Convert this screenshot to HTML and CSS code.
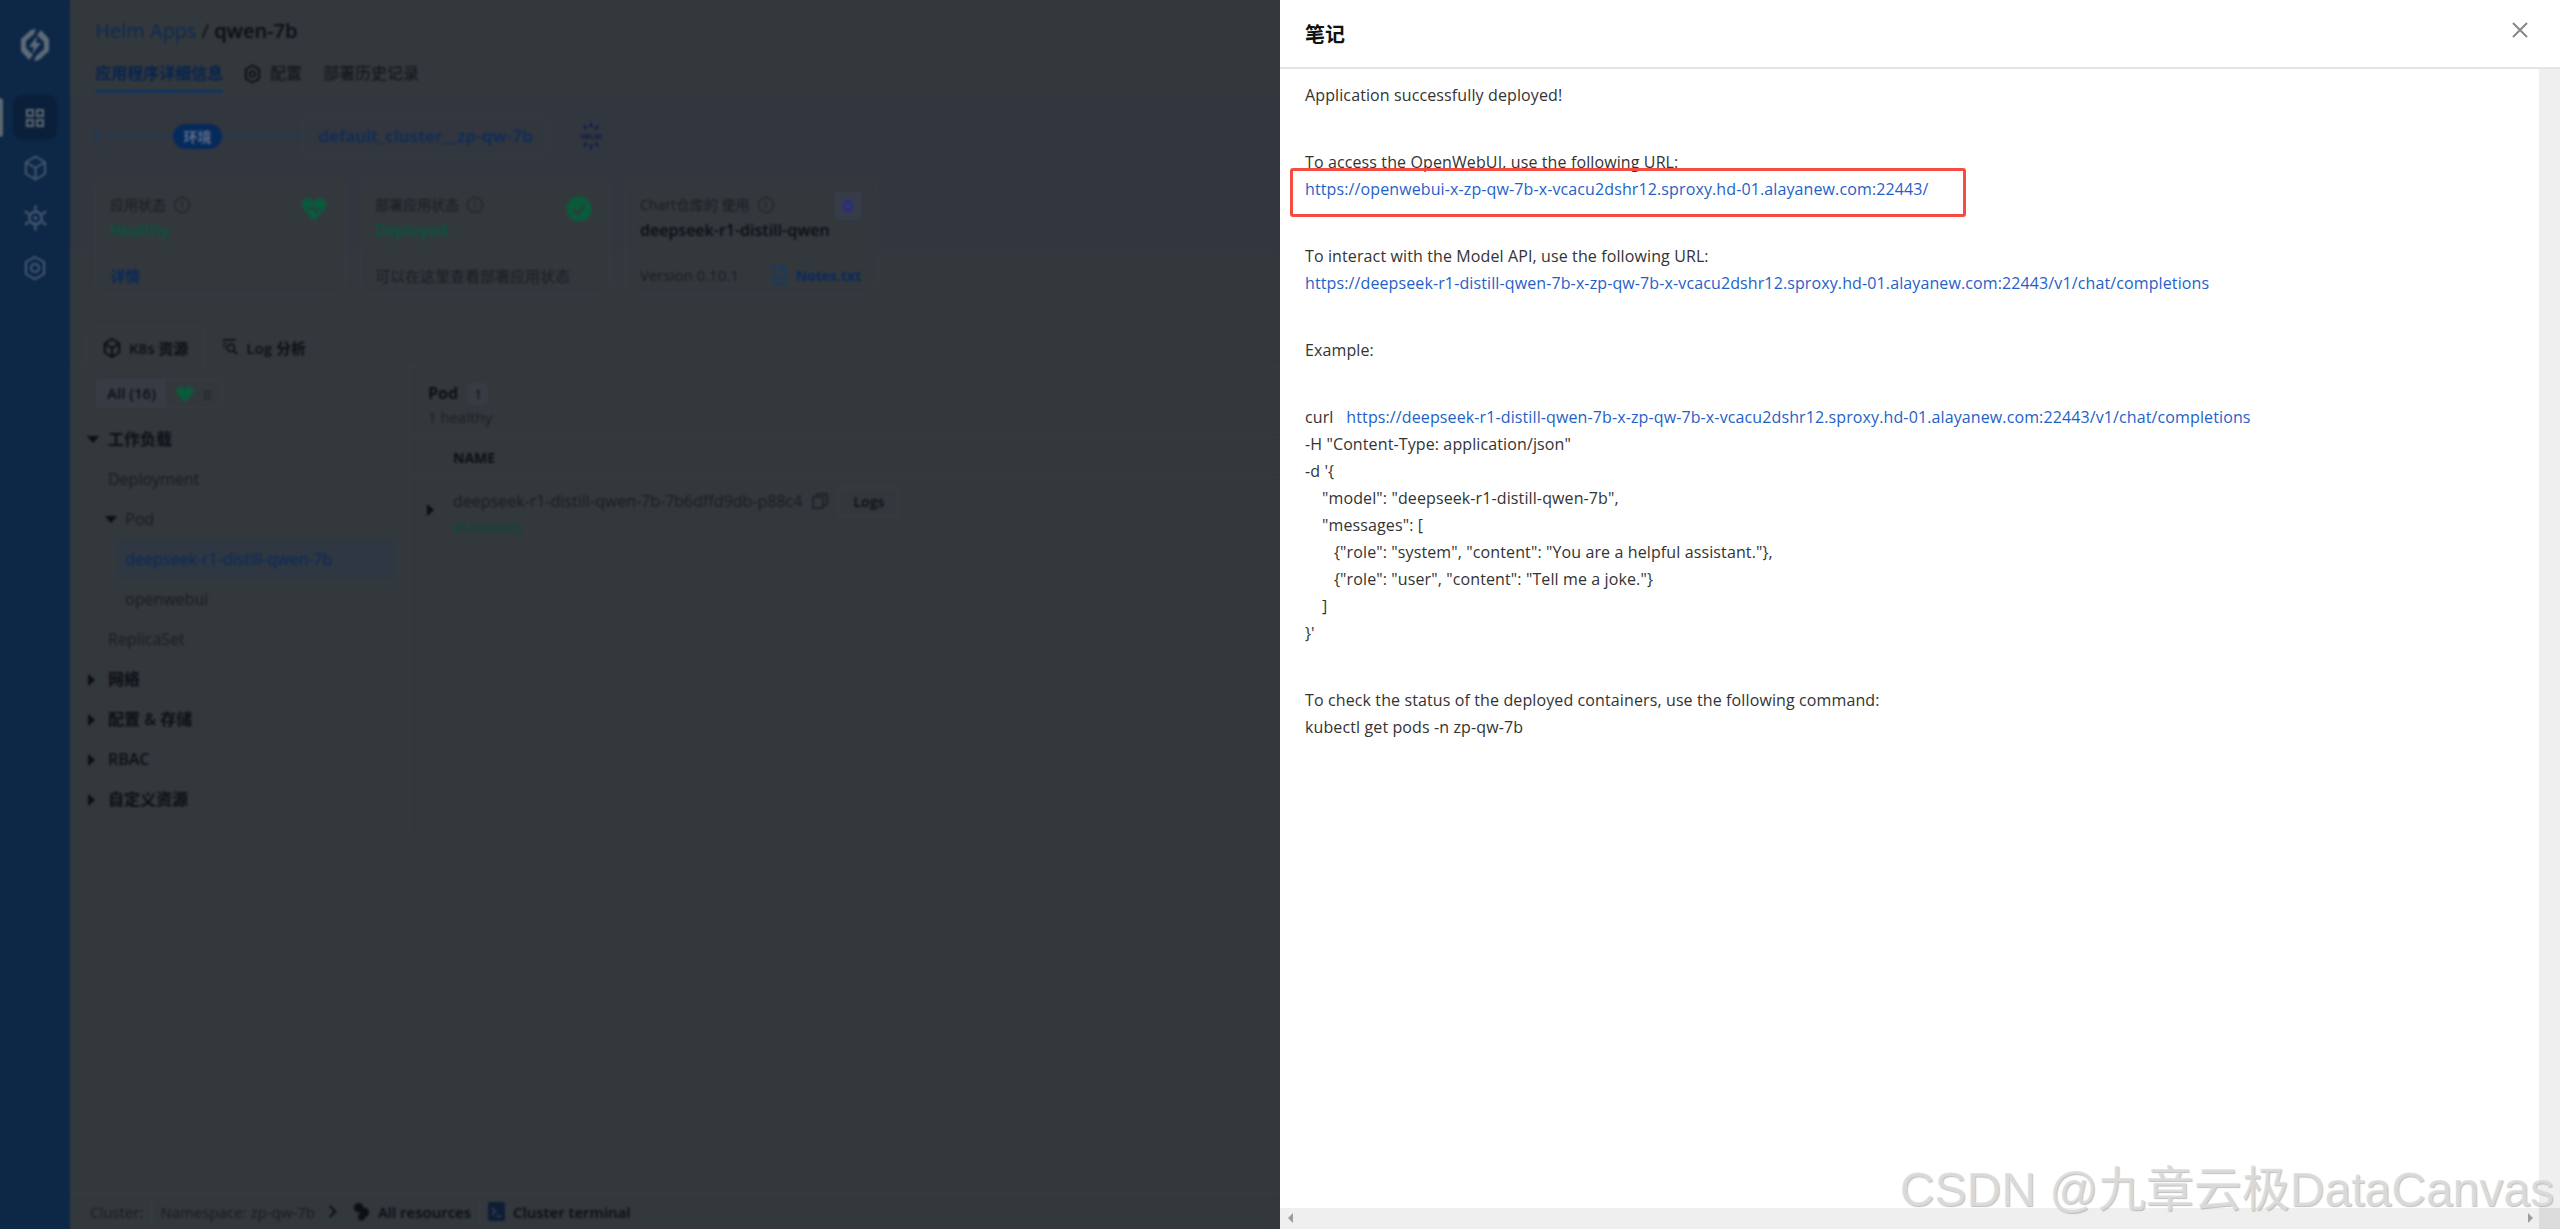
FILE: index.html
```html
<!DOCTYPE html>
<html lang="zh">
<head>
<meta charset="utf-8">
<title>Helm Apps / qwen-7b</title>
<link rel="stylesheet" href="styles.css">
</head>
<body>
<div class="app">
  <nav class="side">
    <svg class="logo" viewBox="0 0 32 36" width="32" height="36"><path d="M12 3 2 12v12l8 9 4-5-7-7v-7l8-7 2-5zM20 33l10-9V12L22 3l-4 5 7 7v7l-8 7-2 5z" fill="#5d6b78"/><path d="M18 9 10 20h5l-2 7 9-11h-5z" fill="#5d6b78"/></svg>
    <div class="side-item active">
      <svg viewBox="0 0 20 20" width="20" height="20"><g fill="none" stroke="#5d6973" stroke-width="2"><rect x="2" y="2" width="6" height="6"/><rect x="12" y="2" width="6" height="6"/><rect x="2" y="12" width="6" height="6"/><rect x="12" y="12" width="6" height="6"/></g></svg>
    </div>
    <div class="side-item">
      <svg viewBox="0 0 24 28" width="23" height="28"><g fill="none" stroke="#465a70" stroke-width="2"><path d="M12 2 22 8v12l-10 6-10-6V8z"/><path d="M2 8l10 6 10-6M12 14v12"/></g></svg>
    </div>
    <div class="side-item">
      <svg viewBox="0 0 26 30" width="25" height="30"><g fill="none" stroke="#465a70" stroke-width="2.4"><circle cx="13" cy="15" r="6.5"/><path d="M13 2v5M13 23v5M2 8l4 3M20 19l4 3M2 22l4-3M20 11l4-3"/></g><circle cx="13" cy="15" r="2" fill="#465a70"/></svg>
    </div>
    <div class="side-item">
      <svg viewBox="0 0 24 26" width="24" height="26"><g fill="none" stroke="#465a70" stroke-width="2"><path d="M12 2 21 7v12l-9 5-9-5V7z"/><circle cx="12" cy="13" r="4"/></g></svg>
    </div>
  </nav>

  <main class="main">
    <header class="head">
      <h1 class="title"><span class="crumb">Helm Apps</span> / <b>qwen-7b</b></h1>
      <div class="tabs">
        <span class="tab on">应用程序详细信息</span>
        <span class="tab icon-tab"><svg viewBox="0 0 18 20" width="17" height="20"><path d="M9 1l7 4v10l-7 4-7-4V5z" fill="none" stroke="#0d1014" stroke-width="2"/><circle cx="9" cy="10" r="3" fill="none" stroke="#0d1014" stroke-width="2"/></svg>配置</span>
        <span class="tab">部署历史记录</span>
      </div>
    </header>

    <section class="band">
      <div class="envline">
        <span class="tick"></span>
        <span class="rule r1"></span>
        <span class="env">环境</span>
        <span class="rule r2"></span>
        <span class="cluster">default_cluster__zp-qw-7b</span>
        <svg class="helm" viewBox="0 0 28 32" width="28" height="32"><g fill="#0c1c4c"><path d="M14 1l2 6h-4zM6 4l5 4-3 2zM22 4l-5 4 3 2zM14 31l2-6h-4zM6 28l5-4-3-2zM22 28l-5-4 3-2z"/></g><text x="14" y="19" class="helm-t">HELM</text></svg>
      </div>

      <div class="cards">
        <article class="card">
          <div class="card-top">
            <div class="lab">应用状态 <i class="q">!</i></div>
            <div class="val green">Healthy</div>
            <svg class="card-ic" viewBox="0 0 26 26" width="26" height="26"><path d="M13 25 2 13C-1 8 2 2 7 2c3 0 5 2 6 4 1-2 3-4 6-4 5 0 8 6 5 11z" fill="#0a5a3c"/><path d="M5 13h5l2-3 3 6 2-3h4" fill="none" stroke="#33383c" stroke-width="1.5"/></svg>
          </div>
          <div class="card-bot"><span class="link">详情</span></div>
        </article>
        <article class="card">
          <div class="card-top">
            <div class="lab">部署应用状态 <i class="q">!</i></div>
            <div class="val green">Deployed</div>
            <svg class="card-ic" viewBox="0 0 26 26" width="26" height="26"><circle cx="13" cy="13" r="12.5" fill="#0a5a3c"/><path d="M7 13.5l4.5 4.5L19 9" fill="none" stroke="#33383c" stroke-width="2.5"/></svg>
          </div>
          <div class="card-bot"><span class="mut">可以在这里查看部署应用状态</span></div>
        </article>
        <article class="card">
          <div class="card-top">
            <div class="lab">Chart仓库的 使用 <i class="q">!</i></div>
            <div class="val dark">deepseek-r1-distill-qwen</div>
            <span class="chart-ic"><svg viewBox="0 0 16 18" width="14" height="16"><path d="M8 1l6 4v8l-6 4-6-4V5z" fill="#2a2f78"/><circle cx="8" cy="9" r="2" fill="#3b3f5a"/></svg></span>
          </div>
          <div class="card-bot spread"><span class="mut">Version 0.10.1</span>
            <span class="link notes"><svg viewBox="0 0 16 20" width="16" height="22"><path d="M2 1h8l4 4v14H2z M10 1v4h4" fill="none" stroke="#123a6b" stroke-width="1.6"/><path d="M5 11h6M5 14h6" stroke="#123a6b" stroke-width="1.4"/></svg>Notes.txt</span></div>
        </article>
      </div>
    </section>

    <section class="lower">
      <div class="subtabs">
        <span class="stab on"><svg viewBox="0 0 20 22" width="18" height="20"><g fill="none" stroke="#0b0e12" stroke-width="2.2"><path d="M10 1l8 5v10l-8 5-8-5V6z"/><path d="M2 6l8 5 8-5M10 11v10"/></g></svg>K8s 资源</span>
        <span class="stab"><svg viewBox="0 0 18 20" width="16" height="18"><g fill="none" stroke="#0d1014" stroke-width="1.8"><path d="M1 2h14M1 6h4M1 10h3"/><circle cx="10" cy="11" r="4"/><path d="M13 14l4 4"/></g></svg>Log 分析</span>
      </div>

      <div class="split">
        <div class="tree">
          <div class="filter">
            <span class="f-all">All (16)</span>
            <span class="f-ok"><svg viewBox="0 0 26 26" width="18" height="18"><path d="M13 25 2 13C-1 8 2 2 7 2c3 0 5 2 6 4 1-2 3-4 6-4 5 0 8 6 5 11z" fill="#0a5a3c"/></svg>8</span>
          </div>
          <div class="row group"><i class="down"></i>工作负载</div>
          <div class="row l1">Deployment</div>
          <div class="row l1 sub"><i class="down"></i>Pod</div>
          <div class="row l2 sel">deepseek-r1-distill-qwen-7b</div>
          <div class="row l2">openwebui</div>
          <div class="row l1">ReplicaSet</div>
          <div class="row group"><i class="right"></i>网络</div>
          <div class="row group"><i class="right"></i>配置 &amp; 存储</div>
          <div class="row group"><i class="right"></i>RBAC</div>
          <div class="row group"><i class="right"></i>自定义资源</div>
        </div>

        <div class="detail">
          <div class="d-head"><b>Pod</b> <span class="count">1</span><div class="d-sub">1 healthy</div></div>
          <div class="d-cols">NAME</div>
          <div class="d-row">
            <i class="right big"></i>
            <div>
              <div class="pod-line">deepseek-r1-distill-qwen-7b-7b6dffd9db-p88c4
                <svg viewBox="0 0 16 16" width="16" height="16"><g fill="none" stroke="#1a1e22" stroke-width="1.5"><rect x="1" y="4" width="10" height="11"/><path d="M5 4V1h10v11h-4"/></g></svg>
                <span class="logs">Logs</span></div>
              <div class="running">RUNNING</div>
            </div>
          </div>
        </div>
      </div>
    </section>

    <footer class="foot">
      <span>Cluster:</span><span class="sep"></span><span>Namespace: zp-qw-7b</span>
      <svg class="chev" viewBox="0 0 10 14" width="9" height="13"><path d="M2 1l6 6-6 6" fill="none" stroke="#0d1014" stroke-width="2.4"/></svg>
      <span class="foot-b"><svg viewBox="0 0 18 20" width="17" height="19"><circle cx="6" cy="6" r="5" fill="#0d1014"/><circle cx="12" cy="11" r="5" fill="#0d1014"/><circle cx="9" cy="16" r="3.5" fill="#0d1014"/></svg>All resources</span>
      <span class="sep"></span>
      <span class="foot-b"><svg viewBox="0 0 18 20" width="17" height="19"><rect width="18" height="20" rx="2" fill="#0f1c36"/><path d="M4 6l4 4-4 4M9 15h5" fill="none" stroke="#3a4350" stroke-width="1.5"/></svg>Cluster terminal</span>
    </footer>
  </main>
</div>

<div class="scrim"></div>

<aside class="drawer">
  <header class="dr-head">
    <h2>笔记</h2>
    <svg class="close" viewBox="0 0 16 16" width="16" height="16"><path d="M1 1l14 14M15 1 1 15" stroke="#888" stroke-width="2" fill="none"/></svg>
  </header>
  <div class="dr-mid">
    <div class="notes-body">
      <p>Application successfully deployed!</p>
      <p>To access the OpenWebUI, use the following URL:<br><a>https://openwebui-x-zp-qw-7b-x-vcacu2dshr12.sproxy.hd-01.alayanew.com:22443/</a></p>
      <p>To interact with the Model API, use the following URL:<br><a>https://deepseek-r1-distill-qwen-7b-x-zp-qw-7b-x-vcacu2dshr12.sproxy.hd-01.alayanew.com:22443/v1/chat/completions</a></p>
      <p>Example:</p>
      <p>curl &nbsp; <a>https://deepseek-r1-distill-qwen-7b-x-zp-qw-7b-x-vcacu2dshr12.sproxy.hd-01.alayanew.com:22443/v1/chat/completions</a><br>
      -H "Content-Type: application/json"<br>
      -d '{<br>
      <span class="i1">"model": "deepseek-r1-distill-qwen-7b",</span><br>
      <span class="i1">"messages": [</span><br>
      <span class="i2">{"role": "system", "content": "You are a helpful assistant."},</span><br>
      <span class="i2">{"role": "user", "content": "Tell me a joke."}</span><br>
      <span class="i1">]</span><br>
      }'</p>
      <p>To check the status of the deployed containers, use the following command:<br>kubectl get pods -n zp-qw-7b</p>
    </div>
    <div class="vbar"></div>
  </div>
  <div class="hbar"><i class="arr-l"></i><i class="arr-r"></i><span class="corner"></span></div>
</aside>

<div class="redbox"></div>
<div class="mark">CSDN @九章云极DataCanvas</div>
</body>
</html>
```
FILE: styles.css
```css
* { box-sizing: border-box; }
html, body { margin: 0; height: 100%; overflow: hidden; }
body { font-family: "Open Sans", "Noto Sans CJK SC", sans-serif; font-size: 14px; color: #14181c; background: #33383c; }

.app { display: flex; height: 1229px; width: 2560px; }
.side { width: 70px; flex: none; background: #0d2747; display: flex; flex-direction: column; align-items: center; padding-top: 27px; }
.logo { margin-bottom: 32px; }
.side-item { width: 44px; height: 45px; margin-bottom: 5px; display: flex; align-items: center; justify-content: center; border-radius: 10px; position: relative; }
.side-item.active { background: #0a1f3a; }
.side-item.active::before { content: ""; position: absolute; left: -14px; top: 3px; width: 4px; height: 39px; background: #5b6770; border-radius: 0 3px 3px 0; }

.main { flex: 1; display: flex; flex-direction: column; min-width: 0; }
.head { height: 96px; padding: 17px 25px 0; }
.title { margin: 0; font-size: 20px; font-weight: 400; line-height: 28px; color: #0b0e12; }
.title b { font-weight: 600; }
.crumb { color: #0c2a52; }
.tabs { display: flex; gap: 21px; margin-top: 11px; height: 37px; }
.tab { font-size: 16px; line-height: 34px; color: #0f1216; height: 37px; display: flex; align-items: flex-start; gap: 9px; }
.tab svg { margin-top: 8px; }
.tab.on { font-weight: 700; color: #06244e; border-bottom: 3px solid #0f3566; }

.band { height: 156px; padding: 21px 25px 0; background: #32363e; position: relative; }
.envline { display: flex; align-items: center; height: 38px; }
.tick { width: 2px; height: 20px; background: #1d3a52; }
.rule { height: 2px; background: #1d3a52; }
.r1 { width: 76px; }
.r2 { width: 80px; }
.env { background: #052a5c; color: #5b6d86; font-size: 14px; font-weight: 700; width: 49px; height: 25px; line-height: 25px; text-align: center; border-radius: 13px; }
.cluster { margin-left: 0; width: 248px; height: 38px; line-height: 36px; padding-left: 15px; font-size: 17px; letter-spacing: .15px; font-weight: 600; color: #0b2c5a; border: 1px solid #363b45; border-radius: 6px; white-space: nowrap; }
.helm { margin-left: 27px; }
.helm-t { font: 700 7.5px "Open Sans", sans-serif; fill: #0c1c4c; text-anchor: middle; }

.cards { display: flex; gap: 14px; margin-top: 22px; }
.card { width: 251px; height: 119px; border: 1px solid #383d44; border-radius: 12px; background: #33383d; }
.card:nth-child(3) { width: 253px; }
.card-top { height: 75px; padding: 15px 14px 0; position: relative; }
.lab { font-size: 14px; line-height: 24px; color: #191d21; display: flex; align-items: center; gap: 8px; }
.q { width: 16px; height: 16px; border: 1px solid #191d21; border-radius: 50%; font-size: 10px; font-style: normal; line-height: 14px; text-align: center; color: #191d21; }
.val { font-size: 16px; line-height: 26px; font-weight: 600; white-space: nowrap; }
.green { color: #06553a; }
.dark { color: #0b0e12; }
.card-ic { position: absolute; right: 18px; top: 18px; }
.chart-ic { position: absolute; right: 16px; top: 14px; width: 26px; height: 28px; background: #383c4a; border-radius: 3px; display: flex; align-items: center; justify-content: center; }
.card-bot { height: 44px; padding: 0 14px; display: flex; align-items: center; font-size: 15px; }
.spread { justify-content: space-between; padding-right: 16px; }
.link { color: #08295a; font-weight: 700; }
.mut { color: #191d21; }
.notes { display: flex; align-items: center; gap: 7px; font-size: 14px; }

.lower { flex: 1; min-height: 0; }
.subtabs { display: flex; margin-top: 75px; height: 40px; padding-left: 15px; border-bottom: 1px solid #373c40; font-size: 15px; font-weight: 600; color: #0d1014; }
.stab { display: flex; align-items: center; gap: 8px; height: 40px; padding: 0 16px; border: 1px solid transparent; }
.stab.on { border-color: #383d41; border-bottom-color: #33383c; border-radius: 6px 6px 0 0; height: 41px; padding-left: 17px; }

.split { display: flex; }
.tree { width: 340px; border-right: 1px solid #363b3f; padding-top: 12px; height: 470px; font-size: 16px; color: #191d21; }
.filter { display: inline-flex; margin: 0 0 11px 26px; height: 29px; border: 1px solid #383d41; border-radius: 3px; vertical-align: top; font-weight: 600; font-size: 15px; }
.f-all { width: 69px; line-height: 26px; text-align: center; background: #373b44; color: #0d1014; }
.f-ok { width: 56px; display: flex; align-items: center; justify-content: center; gap: 9px; color: #22262a; font-weight: 400; }
.row { height: 40px; line-height: 40px; padding-left: 38px; position: relative; white-space: nowrap; }
.group { color: #0d1014; font-weight: 600; }
.row.sub { padding-left: 55px; }
.l2 { padding-left: 55px; margin-left: 0; }
.sel { background: #2e3742; color: #08295a; margin: 0 13px 0 46px; padding-left: 9px; height: 39px; border-radius: 4px; margin-bottom: 1px; }
.down, .right { position: absolute; width: 0; height: 0; top: 15px; }
.down { left: 17px; top: 17px; border-left: 6px solid transparent; border-right: 6px solid transparent; border-top: 7px solid #0b0e12; }
.sub .down { left: 35px; }
.right { left: 18px; border-top: 6px solid transparent; border-bottom: 6px solid transparent; border-left: 7px solid #0b0e12; }

.detail { flex: 1; }
.d-head { height: 71px; padding: 15px 18px 0; border-bottom: 1px solid #383d41; width: 100%; font-size: 16px; color: #0d1014; }
.count { display: inline-block; width: 20px; height: 22px; line-height: 22px; text-align: center; font-size: 13px; background: #373b44; border-radius: 4px; margin-left: 6px; }
.d-sub { font-size: 15px; line-height: 24px; color: #1c2024; }
.d-cols { height: 40px; line-height: 39px; padding-left: 43px; font-size: 14px; font-weight: 700; color: #0d1014; border-bottom: 1px solid #383d41; }
.d-row { display: flex; position: relative; padding: 7px 0 0 43px; font-size: 16px; }
.big { left: 17px; top: 26px; }
.pod-line { display: flex; align-items: center; gap: 10px; height: 32px; color: #191d21; white-space: nowrap; }
.logs { width: 61px; height: 29px; line-height: 27px; text-align: center; border: 1px solid #3a3f43; border-radius: 3px; font-size: 14px; font-weight: 600; margin-left: 0; color: #0d1014; }
.running { line-height: 18px; font-size: 15px; margin-top: 1px; color: #064a36; }

.foot { height: 36px; border-top: 1px solid #383d41; display: flex; align-items: center; padding-left: 20px; font-size: 15px; color: #181c20; }
.sep { width: 1px; height: 20px; background: #3c4145; margin: 0 8px; }
.chev { margin: 0 16px 0 13px; }
.foot-b { display: flex; align-items: center; gap: 8px; color: #0a0d11; font-weight: 600; }

.scrim { position: fixed; left: 0; top: 0; width: 1280px; height: 1229px; backdrop-filter: blur(1px); }

.drawer { position: fixed; left: 1280px; top: 0; width: 1280px; height: 1229px; background: #fff; display: flex; flex-direction: column; }
.dr-head { height: 69px; flex: none; border-bottom: 2px solid #e2e6ea; padding-left: 25px; display: flex; align-items: center; position: relative; }
.dr-head h2 { margin: 0 0 1px; font-size: 20px; font-weight: 700; color: #111; }
.close { position: absolute; left: 1232px; top: 22px; }
.dr-mid { flex: 1; display: flex; min-height: 0; }
.notes-body { flex: 1; padding: 13px 0 0 25px; font-size: 16px; line-height: 27px; letter-spacing: .115px; color: #333; white-space: nowrap; overflow: hidden; }
.notes-body p { margin: 0 0 40px; }
.notes-body a { color: #1f5fc9; }
.i1 { margin-left: 17px; }
.i2 { margin-left: 29px; }
.vbar { width: 21px; flex: none; background: #efefef; }
.hbar { height: 21px; flex: none; background: #efefef; position: relative; }
.corner { position: absolute; right: 0; top: 0; width: 21px; height: 21px; background: #dcdcdc; }
.arr-l, .arr-r { position: absolute; top: 5px; width: 0; height: 0; border-top: 5px solid transparent; border-bottom: 5px solid transparent; }
.arr-l { left: 8px; border-right: 5px solid #9d9d9d; }
.arr-r { right: 27px; border-left: 5px solid #9d9d9d; }

.redbox { position: fixed; left: 1290px; top: 168px; width: 676px; height: 49px; border: 3px solid #f44c41; border-radius: 3px; }
.mark { position: fixed; right: 6px; top: 1160px; font-family: "Liberation Sans", "Noto Sans CJK SC", sans-serif; font-size: 48px; line-height: 60px; color: rgba(222,222,222,.85); text-shadow: 1px 1px 1px rgba(150,150,150,.6); white-space: nowrap; }
```
